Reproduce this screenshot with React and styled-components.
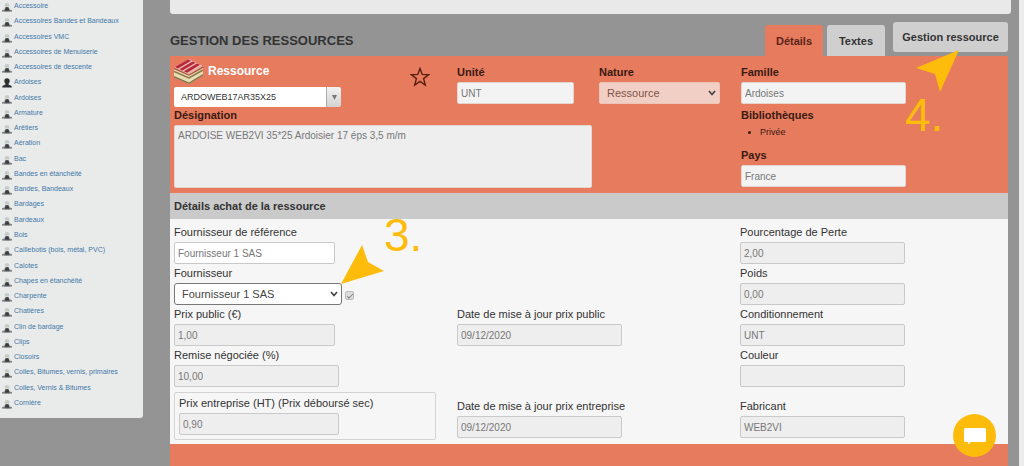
import React from 'react';
import styled, { createGlobalStyle } from 'styled-components';

const families = [
    'Accessoire', 'Accessoires Bandes et Bandeaux', 'Accessoires VMC', 'Accessoires de Menuiserie',
    'Accessoires de descente', 'Ardoises', 'Ardoises', 'Armature', 'Arêtiers', 'Aération', 'Bac',
    'Bandes en étanchéité', 'Bandes, Bandeaux', 'Bardages', 'Bardeaux', 'Bois',
    'Caillebotis (bois, métal, PVC)', 'Calotes', 'Chapes en étanchéité', 'Charpente', 'Chatières',
    'Clin de bardage', 'Clips', 'Closoirs', 'Colles, Bitumes, vernis, primaires',
    'Colles, Vernis & Bitumes', 'Cornière'
];

// index of the family that belongs to the user
const OWN_FAMILY = 5;

const GlobalStyle = createGlobalStyle`
    * {
        box-sizing: border-box;
    }
    body {
        margin: 0;
        background: #949494;
        color: #333;
        font-family: "Liberation Sans", Arial, sans-serif;
        font-size: 11px;
    }
    input, select, textarea, button {
        font-family: inherit;
    }
`

function SharedIcon() {
    return (
        <svg width="10" height="9" viewBox="0 0 10 9" aria-hidden="true">
            <path d="M3 .8C3.600 0 6.400 0 7 .8l.4 2.700H2.700z" fill="#c6c9c9" />
            <path d="M0 8.200V7.100l2.300-.6.9-2.600h3.600l.9 2.600 2.300.6v1.100z" fill="#909394" />
            <path d="M2.600 8.200l.9-3.200L5 4l1.600 1 1.100 3.200z" fill="#3a3d3f" />
            <path d="M0 7.600h10v.8H0z" fill="#6c6f70" />
        </svg>
    )
}

function OwnIcon() {
    return (
        <svg width="10" height="10" viewBox="0 0 10 10" aria-hidden="true">
            <path d="M5 .3c1.700 0 2.700 1.100 2.700 2.700 0 1.200-.5 2.200-1.200 2.800v.8l2.700 1.100c.5.300.6.800.6 1.700H.2c0-.9.1-1.400.6-1.700l2.700-1.100v-.8C2.800 5.200 2.300 4.200 2.300 3 2.300 1.400 3.300.3 5 .3z" fill="#2d2f31" />
        </svg>
    )
}

function BooksIcon() {
    return (
        <svg width="30" height="26" viewBox="0 0 30 26" aria-hidden="true">
            <path d="M0 10l15 7 14-8v8l-14 9-15-7z" fill="#eadbb2" />
            <path d="M0 18l15 6.500L29 16v1.500L15 26 0 19.500z" fill="#77754c" />
            <path d="M0 13.500L15 20l14-8" fill="none" stroke="#8a7a4a" strokeWidth="1.500" />
            <path d="M0 10.500L15 17l14-8" fill="none" stroke="#a8573f" strokeWidth="1.500" />
            <path d="M0 9.500L15 1l14 7-14 8.500z" fill="#e8b5a8" />
            <path d="M1 9L14 1.500l3 1.300L4 10.500zM5.500 11.200L18.500 3.500l3 1.300L8.500 12.500zM10 13.200L23 5.500l3 1.300L13 14.800z" fill="#b8283f" />
        </svg>
    )
}

function StarIcon() {
    return (
        <svg width="20" height="20" viewBox="0 0 20 20" aria-hidden="true">
            <path d="M10 1.500l2.200 5.900 6.300.3-4.900 3.900 1.700 6.400-5.300-3.600L4.700 18l1.700-6.400-4.900-3.900 6.300-.3z" fill="none" stroke="#5a1f10" strokeWidth="1.400" />
        </svg>
    )
}

function Chevron() {
    return (
        <ChevronSvg width="8" height="6" viewBox="0 0 8 6" aria-hidden="true">
            <path d="M1 1l3 3.500L7 1" fill="none" stroke="currentColor" strokeWidth="1.700" />
        </ChevronSvg>
    )
}

function Field({ id, label, value, width, white, bold, offset, column, row }) {
    return (
        <Cell $offset={offset} $column={column} $row={row}>
            <Label htmlFor={id} $bold={bold}>{label}</Label>
            <Input id={id} defaultValue={value} $width={width} $white={white} $plain={bold} readOnly />
        </Cell>
    )
}

function App() {
    return (
        <Page>
            <GlobalStyle />
            <Sidebar>
                {families.map((name, i) => (
                    <SidebarItem key={i}>
                        <SidebarIcon>{i === OWN_FAMILY ? <OwnIcon /> : <SharedIcon />}</SidebarIcon>
                        <SidebarLink href="#">{name}</SidebarLink>
                    </SidebarItem>
                ))}
            </Sidebar>
            <Main>
                <TopPanel />
                <Header>
                    <Title>GESTION DES RESSOURCES</Title>
                    <Tabs>
                        <Tab $active>Détails</Tab>
                        <Tab>Textes</Tab>
                    </Tabs>
                    <ManageWrap>
                        <ManageButton>Gestion ressource</ManageButton>
                        <ManageHint>
                            <svg width="44" height="43" viewBox="0 0 44 43" aria-hidden="true">
                                <path d="M43 0L0 18l19 6 5 18z" fill="#fdbc0c" />
                            </svg>
                            <Step>4.</Step>
                        </ManageHint>
                    </ManageWrap>
                </Header>
                <Panel>
                    <Resource>
                        <div>
                            <ResourceHead>
                                <BooksIcon />
                                <ResourceTitle htmlFor="code">Ressource</ResourceTitle>
                                <StarButton aria-label="Favori"><StarIcon /></StarButton>
                            </ResourceHead>
                            <Combo>
                                <ComboInput id="code" defaultValue="ARDOWEB17AR35X25" />
                                <ComboButton aria-label="Ouvrir">
                                    <svg width="5" height="5" viewBox="0 0 5 5" aria-hidden="true">
                                        <path d="M0 0h5L2.500 5z" fill="#777" />
                                    </svg>
                                </ComboButton>
                            </Combo>
                        </div>
                        <Field id="unite" label="Unité" value="UNT" width={117} bold offset={7} />
                        <Cell $offset={7}>
                            <Label htmlFor="nature" $bold>Nature</Label>
                            <SelectWrap $width={121}>
                                <Select id="nature" $muted defaultValue="Ressource">
                                    <option>Ressource</option>
                                </Select>
                                <Chevron />
                            </SelectWrap>
                        </Cell>
                        <Field id="famille" label="Famille" value="Ardoises" width={165} bold offset={7} />
                        <Designation>
                            <Label htmlFor="designation" $bold>Désignation</Label>
                            <TextArea id="designation" defaultValue="ARDOISE WEB2VI 35*25 Ardoisier 17 éps 3,5 m/m" readOnly />
                        </Designation>
                        <Cell $column={4}>
                            <Label as="div" $bold>Bibliothèques</Label>
                            <Libraries>
                                <li>Privée</li>
                            </Libraries>
                            <Label htmlFor="pays" $bold>Pays</Label>
                            <Input id="pays" defaultValue="France" $width={165} $plain readOnly />
                        </Cell>
                    </Resource>
                    <SectionTitle>Détails achat de la ressource</SectionTitle>
                    <Purchase>
                        <Field id="fref" label="Fournisseur de référence" value="Fournisseur 1 SAS" width={161} white column={1} row={1} />
                        <Cell $column={1} $row={2}>
                            <Label htmlFor="fournisseur">Fournisseur</Label>
                            <SupplierRow>
                                <SelectWrap $width={168}>
                                    <Select id="fournisseur" defaultValue="Fournisseur 1 SAS">
                                        <option>Fournisseur 1 SAS</option>
                                    </Select>
                                    <Chevron />
                                </SelectWrap>
                                <Check type="checkbox" defaultChecked disabled aria-label="Fournisseur par défaut" />
                                <SupplierHint>
                                    <svg width="43" height="39" viewBox="0 0 43 39" aria-hidden="true">
                                        <path d="M0 39L21 0l6 17 16 9z" fill="#fdbc0c" />
                                    </svg>
                                    <Step>3.</Step>
                                </SupplierHint>
                            </SupplierRow>
                        </Cell>
                        <Field id="public" label="Prix public (€)" value="1,00" width={161} column={1} row={3} />
                        <Field id="remise" label="Remise négociée (%)" value="10,00" width={165} column={1} row={4} />
                        <CompanyPrice>
                            <Label htmlFor="entreprise">Prix entreprise (HT) (Prix déboursé sec)</Label>
                            <Input id="entreprise" defaultValue="0,90" $width={160} readOnly />
                        </CompanyPrice>

                        <Field id="datePublic" label="Date de mise à jour prix public" value="09/12/2020" width={165} column={2} row={3} />
                        <Field id="dateEntreprise" label="Date de mise à jour prix entreprise" value="09/12/2020" width={165} column={2} row={5} offset={10} />

                        <Field id="perte" label="Pourcentage de Perte" value="2,00" width={165} column={3} row={1} />
                        <Field id="poids" label="Poids" value="0,00" width={165} column={3} row={2} />
                        <Field id="cond" label="Conditionnement" value="UNT" width={165} column={3} row={3} />
                        <Field id="couleur" label="Couleur" value="" width={165} column={3} row={4} />
                        <Field id="fabricant" label="Fabricant" value="WEB2VI" width={165} column={3} row={5} offset={10} />
                    </Purchase>
                </Panel>
            </Main>
            <ChatButton aria-label="Discussion">
                <svg width="24" height="18" viewBox="0 0 24 18" aria-hidden="true">
                    <path d="M2.500 1h19A1.500 1.500 0 0 1 23 2.500v11a1.500 1.500 0 0 1-1.500 1.500H8l-3 2.500V15H2.500A1.500 1.500 0 0 1 1 13.500v-11A1.500 1.500 0 0 1 2.500 1z" fill="#fff" />
                </svg>
            </ChatButton>
        </Page>
    )
}

const Page = styled.div`
    display: flex;
    align-items: stretch;
    min-height: 100vh;
    border-right: 5px solid #ececec;
`

const Sidebar = styled.ul`
    flex: 0 0 143px;
    align-self: flex-start;
    display: flex;
    flex-direction: column;
    justify-content: space-between;
    min-height: calc(100vh - 48px);
    margin: 0;
    padding: 0 0 9px 2px;
    list-style: none;
    background: #e9eaea;
    border-radius: 0 0 3px 0;
`

const SidebarItem = styled.li`
    display: flex;
    height: 12px;
    gap: 2px;
`

const SidebarIcon = styled.span`
    display: flex;
    align-items: flex-end;
    width: 10px;
`

const SidebarLink = styled.a`
    color: #4279a8;
    font-size: 7px;
    line-height: 12px;
    text-decoration: none;
    white-space: nowrap;
`

const Main = styled.main`
    flex: 1;
    min-width: 0;
    display: flex;
    flex-direction: column;
    padding: 0 8px 0 27px;
`

const TopPanel = styled.div`
    height: 14px;
    background: #e9e9e9;
    border-radius: 0 0 3px 3px;
`

const Header = styled.header`
    display: flex;
    height: 42px;
    margin-right: 3px;
    align-items: flex-end;
`

const Title = styled.h1`
    flex: 1;
    margin: 0 0 7px;
    color: #333;
    font-size: 13px;
    line-height: 16px;
`

const Tabs = styled.nav`
    display: flex;
    gap: 4px;
`

const Tab = styled.button`
    height: 31px;
    width: 58px;
    padding: 0;
    border: 0;
    border-radius: 3px 3px 0 0;
    background: ${props => props.$active ? '#e67b5e' : '#cfcfcf'};
    color: ${props => props.$active ? '#5a2418' : '#333'};
    font-size: 11px;
    font-weight: 700;
`

const ManageWrap = styled.div`
    position: relative;
    align-self: flex-start;
    padding-top: 8px;
    margin-left: 8px;
`

const ManageButton = styled.button`
    height: 30px;
    width: 115px;
    padding: 0;
    border: 0;
    border-radius: 3px;
    background: #cfcfcf;
    color: #333;
    font-size: 11px;
    font-weight: 700;
`

const ManageHint = styled.div`
    position: absolute;
    top: 36px;
    left: 12px;
    padding-left: 11px;
    z-index: 2;

    svg {
        display: block;
    }
    span {
        position: absolute;
        top: 42px;
        left: 0;
    }
`

const Step = styled.span`
    color: #fdbc0c;
    font-size: 46px;
    line-height: 46px;
`

const Panel = styled.section`
    flex: 1;
    margin-right: 3px;
    background: #e67b5e;
`

const Resource = styled.div`
    display: grid;
    grid-template-columns: 283fr 142fr 142fr 267fr;
    grid-template-rows: 50px auto;
    padding: 2px 0 5px 4px;
`

const ResourceHead = styled.div`
    display: flex;
    height: 29px;
    gap: 4px;
`

const ResourceTitle = styled.label`
    flex: 1;
    color: #fff;
    font-size: 12px;
    font-weight: 700;
    line-height: 26px;
`

const StarButton = styled.button`
    align-self: flex-end;
    margin-right: 27px;
    padding: 0;
    border: 0;
    background: none;

    svg {
        display: block;
    }
`

const Combo = styled.div`
    display: flex;
    width: 167px;
    height: 20px;
    border-radius: 2px;
    overflow: hidden;
`

const ComboInput = styled.input`
    flex: 1;
    min-width: 0;
    padding: 0 7px;
    border: 0;
    background: #fff;
    color: #333;
    font-size: 9px;
`

const ComboButton = styled.button`
    display: flex;
    align-items: center;
    justify-content: center;
    width: 15px;
    padding: 0;
    border: 0;
    border-left: 1px solid #aaa;
    background: linear-gradient(#f2f2f2, #d2d2d2);
`

const Cell = styled.div`
    margin-top: ${props => props.$offset || 0}px;
    grid-column: ${props => props.$column || 'auto'};
    grid-row: ${props => props.$row || 'auto'};
`

const Label = styled.label`
    display: block;
    margin-bottom: 3px;
    color: ${props => props.$bold ? '#3a1a12' : '#333'};
    font-size: 11px;
    font-weight: ${props => props.$bold ? 700 : 400};
    line-height: 14px;
    white-space: nowrap;
`

const Input = styled.input`
    display: block;
    width: ${props => props.$width}px;
    height: 22px;
    padding: 0 3px;
    border: 1px solid ${props => props.$plain ? '#e3d5d0' : '#c9c9c9'};
    border-radius: 2px;
    background: ${props => props.$white ? '#fff' : props.$plain ? '#f3f3f3' : '#eee'};
    color: #777;
    font-size: 10px;
`

const SelectWrap = styled.div`
    position: relative;
    width: ${props => props.$width}px;
`

const Select = styled.select`
    appearance: none;
    display: block;
    width: 100%;
    height: 22px;
    padding: 0 7px;
    border: 1px solid ${props => props.$muted ? '#edc5b8' : '#777'};
    border-radius: ${props => props.$muted ? 2 : 3}px;
    background: ${props => props.$muted ? '#f2cfc4' : '#fff'};
    color: ${props => props.$muted ? '#7d5449' : '#444'};
    font-size: 11px;
`

const ChevronSvg = styled.svg`
    position: absolute;
    right: 4px;
    top: 8px;
    color: #444;
    pointer-events: none;
`

const Designation = styled.div`
    grid-column: 1 / span 2;
    padding-right: 7px;
`

const TextArea = styled.textarea`
    display: block;
    width: 100%;
    height: 63px;
    padding: 3px;
    border: 1px solid #e3d5d0;
    border-radius: 2px;
    background: #eee;
    color: #777;
    font-size: 10px;
    line-height: 14px;
    resize: none;
`

const Libraries = styled.ul`
    margin: 0 0 9px;
    padding-left: 19px;
    color: #3a1a12;
    font-size: 9px;
    line-height: 14px;
`

const SectionTitle = styled.h2`
    margin: 0;
    padding: 0 4px;
    background: #cacaca;
    color: #333;
    font-size: 11px;
    line-height: 26px;
`

const Purchase = styled.div`
    display: grid;
    grid-template-columns: 283fr 283fr 268fr;
    row-gap: 2px;
    padding: 6px 0 4px 4px;
    background: #f6f6f6;
`

const SupplierRow = styled.div`
    position: relative;
    display: flex;
    align-items: center;
    gap: 3px;
`

const Check = styled.input`
    appearance: none;
    width: 9px;
    height: 9px;
    margin: 3px 0 0;
    border: 1px solid #bbb;
    border-radius: 2px;
    background: #ddd;
    display: grid;
    place-content: center;

    &::before {
        content: '';
        width: 5px;
        height: 2px;
        border-left: 1px solid #888;
        border-bottom: 1px solid #888;
        transform: rotate(-45deg);
    }
`

const SupplierHint = styled.div`
    position: absolute;
    left: 167px;
    bottom: 21px;
    display: flex;
    align-items: flex-end;
    z-index: 2;

    span {
        margin-bottom: 26px;
    }
`

const CompanyPrice = styled.div`
    grid-column: 1;
    grid-row: 5;
    width: 262px;
    margin-top: 3px;
    padding: 3px 4px 4px;
    border: 1px solid #d3d3d6;
    border-radius: 2px;
`

const ChatButton = styled.button`
    position: fixed;
    right: 28px;
    bottom: 9px;
    display: flex;
    align-items: center;
    justify-content: center;
    width: 43px;
    height: 43px;
    padding: 0;
    border: 0;
    border-radius: 50%;
    background: #fdbc0c;
    z-index: 3;
`

export default App;
